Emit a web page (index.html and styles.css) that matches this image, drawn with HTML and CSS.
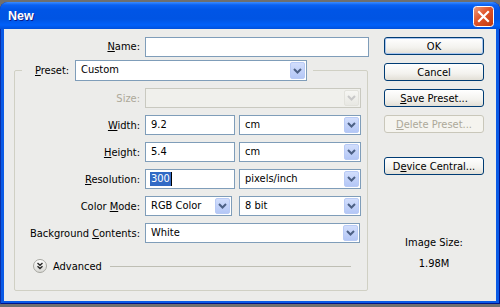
FILE: index.html
```html
<!DOCTYPE html>
<html>
<head>
<meta charset="utf-8">
<link rel="stylesheet" href="styles.css">
</head>
<body>
<div class="window">
  <div class="titlebar">
    <span class="title">New</span>
    <span class="close">
      <svg width="21" height="21" viewBox="0 0 21 21">
        <defs>
          <linearGradient id="cg" x1="0" y1="0" x2="1" y2="1">
            <stop offset="0" stop-color="#F0A080"/>
            <stop offset="0.45" stop-color="#E0542A"/>
            <stop offset="1" stop-color="#C0380E"/>
          </linearGradient>
        </defs>
        <rect x="0.5" y="0.5" width="20" height="20" rx="3" fill="url(#cg)" stroke="#FFFFFF"/>
        <path d="M6 6 L15 15 M15 6 L6 15" stroke="#FFFFFF" stroke-width="2.2" stroke-linecap="square"/>
      </svg>
    </span>
  </div>
  <div class="client">
    <div class="main">
      <div class="name-row">
        <span class="lbl"><u>N</u>ame:</span>
        <div class="field name-field"></div>
      </div>
      <fieldset class="group">
        <legend class="preset">
          <span class="preset-lbl"><u>P</u>reset:</span>
          <div class="select preset-select"><span class="val">Custom</span><span class="arrow"><svg width="9" height="6" viewBox="0 0 9 6"><path d="M1 1 L4.5 4.5 L8 1" fill="none" stroke="#4D6185" stroke-width="2"/></svg></span></div>
        </legend>
        <div class="row">
          <span class="lbl dim">Size:</span>
          <div class="select disabled w216"><span class="val"></span><span class="arrow"><svg width="9" height="6" viewBox="0 0 9 6"><path d="M1 1 L4.5 4.5 L8 1" fill="none" stroke="#C8C8C8" stroke-width="2"/></svg></span></div>
        </div>
        <div class="row">
          <span class="lbl"><u>W</u>idth:</span>
          <div class="field num">9.2</div>
          <div class="select unit"><span class="val">cm</span><span class="arrow"><svg width="9" height="6" viewBox="0 0 9 6"><path d="M1 1 L4.5 4.5 L8 1" fill="none" stroke="#4D6185" stroke-width="2"/></svg></span></div>
        </div>
        <div class="row">
          <span class="lbl"><u>H</u>eight:</span>
          <div class="field num">5.4</div>
          <div class="select unit"><span class="val">cm</span><span class="arrow"><svg width="9" height="6" viewBox="0 0 9 6"><path d="M1 1 L4.5 4.5 L8 1" fill="none" stroke="#4D6185" stroke-width="2"/></svg></span></div>
        </div>
        <div class="row">
          <span class="lbl"><u>R</u>esolution:</span>
          <div class="field num"><span class="sel">300</span><span class="caret"></span></div>
          <div class="select unit"><span class="val">pixels/inch</span><span class="arrow"><svg width="9" height="6" viewBox="0 0 9 6"><path d="M1 1 L4.5 4.5 L8 1" fill="none" stroke="#4D6185" stroke-width="2"/></svg></span></div>
        </div>
        <div class="row">
          <span class="lbl">Color <u>M</u>ode:</span>
          <div class="select mode"><span class="val">RGB Color</span><span class="arrow"><svg width="9" height="6" viewBox="0 0 9 6"><path d="M1 1 L4.5 4.5 L8 1" fill="none" stroke="#4D6185" stroke-width="2"/></svg></span></div>
          <div class="select unit"><span class="val">8 bit</span><span class="arrow"><svg width="9" height="6" viewBox="0 0 9 6"><path d="M1 1 L4.5 4.5 L8 1" fill="none" stroke="#4D6185" stroke-width="2"/></svg></span></div>
        </div>
        <div class="row last">
          <span class="lbl">Background <u>C</u>ontents:</span>
          <div class="select w215"><span class="val">White</span><span class="arrow"><svg width="9" height="6" viewBox="0 0 9 6"><path d="M1 1 L4.5 4.5 L8 1" fill="none" stroke="#4D6185" stroke-width="2"/></svg></span></div>
        </div>
        <div class="advanced">
          <span class="adv-icon"><svg width="14" height="14" viewBox="0 0 14 14"><defs><linearGradient id="ag" x1="0" y1="0" x2="0" y2="1"><stop offset="0" stop-color="#FFFFFF"/><stop offset="1" stop-color="#D8D8D4"/></linearGradient></defs><circle cx="7" cy="7" r="6.5" fill="url(#ag)" stroke="#A6A6A0"/><path d="M4.5 4 L7 6.3 L9.5 4 M4.5 7.3 L7 9.6 L9.5 7.3" fill="none" stroke="#2A2A2A" stroke-width="1.4"/></svg></span>
          <span class="adv-text">Advanced</span>
          <span class="adv-line"></span>
        </div>
      </fieldset>
    </div>
    <div class="side">
      <div class="btn default">OK</div>
      <div class="btn">Cancel</div>
      <div class="btn"><span><u>S</u>ave Preset...</span></div>
      <div class="btn off"><span><u>D</u>elete Preset...</span></div>
      <div class="btn device"><span>D<u>e</u>vice Central...</span></div>
      <div class="imgsize">
        <div class="is-lbl">Image Size:</div>
        <div class="is-val">1.98M</div>
      </div>
    </div>
  </div>
</div>
</body>
</html>
```

FILE: styles.css
```css
html, body {
  margin: 0;
  padding: 0;
}
body {
  width: 500px;
  height: 307px;
  overflow: hidden;
  background: #6f6f6f;
  font-family: "DejaVu Sans Condensed", "Liberation Sans", sans-serif;
  font-size: 11px;
  color: #000;
}
.window {
  margin-top: 2px;
  height: 302px;
  display: flex;
  flex-direction: column;
  background: #0A5AE6;
  border-radius: 8px 8px 0 0;
  box-shadow: inset 1px 0 #0A2FA8, inset -1px 0 #00138C, inset 0 -1px #00138C;
}
.titlebar {
  height: 27px;
  flex: none;
  display: flex;
  align-items: center;
  justify-content: space-between;
  padding: 0 6px 0 8px;
  border-radius: 8px 8px 0 0;
  background: linear-gradient(#3C8DFF 0, #0A61F2 3px, #0055E6 8px, #0054E3 17px, #0060FA 23px, #0050DC 27px);
}
.title {
  color: #fff;
  font-family: "Liberation Sans", sans-serif;
  font-weight: bold;
  font-size: 12.5px;
  text-shadow: 1px 1px 0 #0A1D8A;
  margin-top: 1px;
}
.close {
  display: flex;
  margin-top: 2px;
}
.client {
  flex: 1;
  margin: 0 4px 3px;
  background: #ECECEA;
  display: flex;
}
.main {
  width: 366px;
  padding-top: 8px;
}
.name-row {
  display: flex;
  height: 20px;
}
.name-row .lbl {
  width: 136px;
  margin-right: 5px;
  text-align: right;
  line-height: 20px;
}
.field {
  box-sizing: border-box;
  height: 20px;
  border: 1px solid #7F9DB9;
  background: #fff;
  padding-left: 5px;
  line-height: 18px;
  display: flex;
  align-items: center;
}
.name-field {
  width: 224px;
}
.group {
  margin: 3px 0 0 10px;
  width: 354px;
  box-sizing: border-box;
  border: 1px solid #D0D0C4;
  border-radius: 2px;
  padding: 7px 0 17px 0;
  min-width: 0;
}
.preset {
  margin-left: 7px;
  padding: 0 6px 0 13px;
  display: flex;
  align-items: center;
  height: 21px;
}
.preset-lbl {
  width: 35px;
  margin-right: 5px;
}
.select {
  box-sizing: border-box;
  height: 20px;
  border: 1px solid #7F9DB9;
  background: #fff;
  display: flex;
}
.select .val {
  flex: 1;
  padding-left: 5px;
  line-height: 18px;
  white-space: nowrap;
  overflow: hidden;
}
.select .arrow {
  width: 15px;
  margin: 1px;
  box-sizing: border-box;
  border: 1px solid #B8CAF5;
  border-radius: 2px;
  background: linear-gradient(#D2DEFC, #B4C7F6);
  display: flex;
  align-items: center;
  justify-content: center;
}
.preset-select {
  width: 232px;
  height: 21px;
}
.select.disabled {
  border-color: #C9C9C0;
  background: #F0F0EC;
}
.select.disabled .arrow {
  border-color: #E2E2DC;
  background: linear-gradient(#F6F6F3, #E8E8E3);
}
.row {
  display: flex;
  align-items: center;
  height: 20px;
  margin-bottom: 7px;
}
.row.last {
  margin-bottom: 16px;
}
.row .lbl {
  width: 125px;
  margin-right: 5px;
  text-align: right;
  white-space: nowrap;
}
.dim {
  color: #ACA899;
}
.w216 { width: 216px; }
.w215 { width: 215px; }
.num {
  width: 90px;
  margin-right: 4px;
}
.unit {
  width: 122px;
}
.mode {
  width: 87px;
  margin-right: 7px;
}
.sel {
  background: #316AC5;
  color: #fff;
  line-height: 14px;
  padding: 0 1px;
  margin-left: -1px;
}
.caret {
  width: 1px;
  height: 14px;
  background: #000;
}
.advanced {
  display: flex;
  align-items: center;
  height: 14px;
  padding-left: 18px;
}
.adv-icon {
  display: flex;
}
.adv-text {
  margin-left: 6px;
}
.adv-line {
  flex: 1;
  height: 0;
  border-top: 1px solid #BEBEB4;
  margin: 0 16px 0 8px;
}
.side {
  width: 100px;
  margin-left: 14px;
  padding-top: 8px;
  display: flex;
  flex-direction: column;
}
.btn {
  box-sizing: border-box;
  height: 18px;
  margin-bottom: 8px;
  border: 1px solid #003C74;
  border-radius: 3px;
  background: linear-gradient(#FFFFFF 0%, #F3F2EE 60%, #E2DFD6 100%);
  display: flex;
  align-items: center;
  justify-content: center;
  white-space: nowrap;
}
.btn.default {
  box-shadow: inset 0 0 0 1px #A9C6F0;
}
.btn.off {
  border-color: #C9C7BA;
  color: #ACA899;
  background: #F5F4EF;
}
.btn.device {
  margin-top: 16px;
}
.imgsize {
  margin-top: 53px;
  text-align: center;
  line-height: 13px;
}
.is-val {
  margin-top: 8px;
}
```
